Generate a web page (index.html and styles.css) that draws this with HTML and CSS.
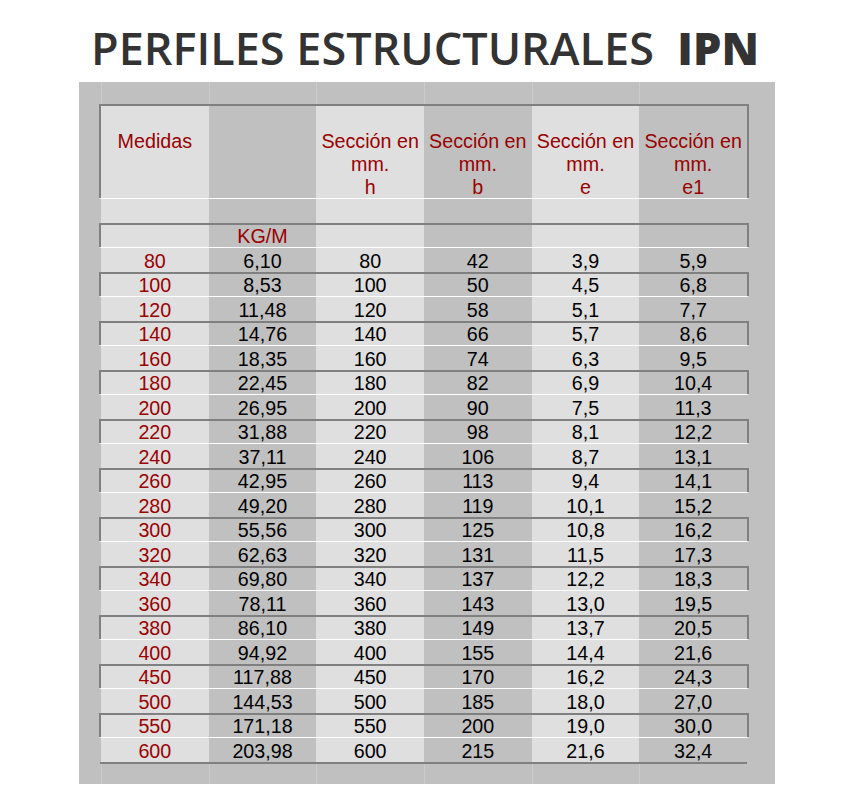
FILE: index.html
```html
<!DOCTYPE html>
<html lang="es">
<head>
<meta charset="utf-8">
<title>Perfiles estructurales IPN</title>
<link rel="stylesheet" href="styles.css">
</head>
<body>
<h1 class="title">PERFILES ESTRUCTURALES&nbsp; <b>IPN</b></h1>
<div class="sheet">
  <div class="band"><i></i><i></i><i></i><i></i><i></i><i></i></div>
  <div class="tbl">
    <div class="row head boxed">
      <div>Medidas</div><div></div>
      <div>Sección en<br>mm.<br>h</div>
      <div>Sección en<br>mm.<br>b</div>
      <div>Sección en<br>mm.<br>e</div>
      <div>Sección en<br>mm.<br>e1</div>
    </div>
    <div class="row"><div></div><div></div><div></div><div></div><div></div><div></div></div>
    <div class="row boxed kg"><div></div><div>KG/M</div><div></div><div></div><div></div><div></div></div>
    <div class="row"><div>80</div><div>6,10</div><div>80</div><div>42</div><div>3,9</div><div>5,9</div></div>
    <div class="row boxed"><div>100</div><div>8,53</div><div>100</div><div>50</div><div>4,5</div><div>6,8</div></div>
    <div class="row"><div>120</div><div>11,48</div><div>120</div><div>58</div><div>5,1</div><div>7,7</div></div>
    <div class="row boxed"><div>140</div><div>14,76</div><div>140</div><div>66</div><div>5,7</div><div>8,6</div></div>
    <div class="row"><div>160</div><div>18,35</div><div>160</div><div>74</div><div>6,3</div><div>9,5</div></div>
    <div class="row boxed"><div>180</div><div>22,45</div><div>180</div><div>82</div><div>6,9</div><div>10,4</div></div>
    <div class="row"><div>200</div><div>26,95</div><div>200</div><div>90</div><div>7,5</div><div>11,3</div></div>
    <div class="row boxed"><div>220</div><div>31,88</div><div>220</div><div>98</div><div>8,1</div><div>12,2</div></div>
    <div class="row"><div>240</div><div>37,11</div><div>240</div><div>106</div><div>8,7</div><div>13,1</div></div>
    <div class="row boxed"><div>260</div><div>42,95</div><div>260</div><div>113</div><div>9,4</div><div>14,1</div></div>
    <div class="row"><div>280</div><div>49,20</div><div>280</div><div>119</div><div>10,1</div><div>15,2</div></div>
    <div class="row boxed"><div>300</div><div>55,56</div><div>300</div><div>125</div><div>10,8</div><div>16,2</div></div>
    <div class="row"><div>320</div><div>62,63</div><div>320</div><div>131</div><div>11,5</div><div>17,3</div></div>
    <div class="row boxed"><div>340</div><div>69,80</div><div>340</div><div>137</div><div>12,2</div><div>18,3</div></div>
    <div class="row"><div>360</div><div>78,11</div><div>360</div><div>143</div><div>13,0</div><div>19,5</div></div>
    <div class="row boxed"><div>380</div><div>86,10</div><div>380</div><div>149</div><div>13,7</div><div>20,5</div></div>
    <div class="row"><div>400</div><div>94,92</div><div>400</div><div>155</div><div>14,4</div><div>21,6</div></div>
    <div class="row boxed"><div>450</div><div>117,88</div><div>450</div><div>170</div><div>16,2</div><div>24,3</div></div>
    <div class="row"><div>500</div><div>144,53</div><div>500</div><div>185</div><div>18,0</div><div>27,0</div></div>
    <div class="row boxed"><div>550</div><div>171,18</div><div>550</div><div>200</div><div>19,0</div><div>30,0</div></div>
    <div class="row"><div>600</div><div>203,98</div><div>600</div><div>215</div><div>21,6</div><div>32,4</div></div>
    <div class="endline"></div>
  </div>
  <div class="band bottom"><i></i><i></i><i></i><i></i><i></i><i></i></div>
</div>
</body>
</html>
```

FILE: styles.css
```css
html, body {
  margin: 0;
  padding: 0;
  background: #ffffff;
}

.title {
  margin: 0;
  padding: 25px 4px 0 0;
  height: 45px;
  line-height: 45px;
  font-family: "Open Sans", "DejaVu Sans", sans-serif;
  font-size: 45px;
  font-weight: 600;
  color: #333333;
  text-align: center;
  white-space: nowrap;
}

.title b {
  font-weight: 800;
}

.sheet {
  box-sizing: border-box;
  width: 696px;
  height: 702px;
  margin: 12px auto 0;
  padding: 0 26px 0 20px;
  background: #c0c0c0;
  display: flex;
  flex-direction: column;
  font-family: "Liberation Sans", Arial, sans-serif;
  font-size: 19.7px;
  color: #000;
}

.band {
  height: 22px;
  margin: 0 2px;
  display: grid;
  grid-template-columns: repeat(6, 1fr);
}

.band i {
  border-left: 1px solid #cbcbcb;
}

.band.bottom {
  flex: 1;
  height: auto;
}

.tbl {
  display: flex;
  flex-direction: column;
}

.row {
  box-sizing: border-box;
  height: 24.5px;
  display: grid;
  grid-template-columns: repeat(6, 1fr);
  border-top: 1px solid #ffffff;
  border-left: 2px solid transparent;
  border-right: 2px solid transparent;
}

.row.boxed {
  border-top: 2px solid #808080;
  border-left-color: #808080;
  border-right-color: #808080;
}

.row > div {
  background: #dfdfdf;
  text-align: center;
  line-height: 22px;
  padding-top: 1.5px;
  white-space: nowrap;
}

.row.boxed > div {
  padding-top: 0.5px;
}

.row > div:nth-child(even) {
  background: #c0c0c0;
}

.row > div:first-child {
  color: #990000;
}

.row.kg > div:nth-child(2) {
  color: #990000;
}

.row.head {
  height: 94px;
}

.row.head > div {
  color: #990000;
  line-height: 23px;
  padding-top: 24px;
}

.endline {
  height: 2px;
  margin: 0 2px 0 1px;
  background: #808080;
}
```
